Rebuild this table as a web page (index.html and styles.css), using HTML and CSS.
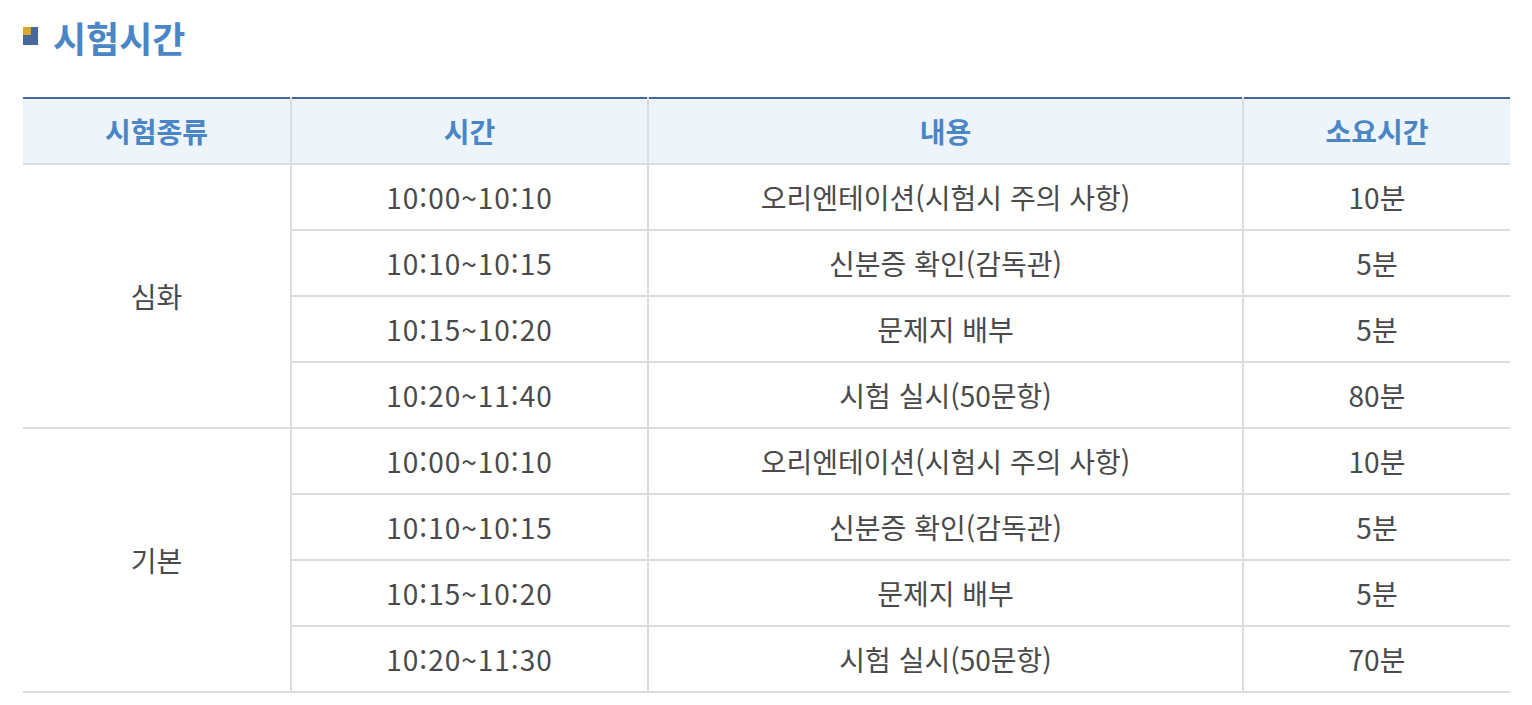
FILE: index.html
```html
<!DOCTYPE html>
<html lang="ko">
<head>
<meta charset="utf-8">
<link rel="stylesheet" href="styles.css">
</head>
<body>
<div class="page">
  <h2 class="title"><span class="bullet"><span class="bullet-corner"></span></span>시험시간</h2>
  <table class="schedule">
    <colgroup>
      <col class="c1"><col class="c2"><col class="c3"><col class="c4">
    </colgroup>
    <thead>
      <tr><th>시험종류</th><th>시간</th><th>내용</th><th>소요시간</th></tr>
    </thead>
    <tbody>
      <tr><td rowspan="4">심화</td><td class="time">10:00~10:10</td><td>오리엔테이션(시험시 주의 사항)</td><td>10분</td></tr>
      <tr><td class="time">10:10~10:15</td><td>신분증 확인(감독관)</td><td>5분</td></tr>
      <tr><td class="time">10:15~10:20</td><td>문제지 배부</td><td>5분</td></tr>
      <tr><td class="time">10:20~11:40</td><td>시험 실시(50문항)</td><td>80분</td></tr>
      <tr><td rowspan="4">기본</td><td class="time">10:00~10:10</td><td>오리엔테이션(시험시 주의 사항)</td><td>10분</td></tr>
      <tr><td class="time">10:10~10:15</td><td>신분증 확인(감독관)</td><td>5분</td></tr>
      <tr><td class="time">10:15~10:20</td><td>문제지 배부</td><td>5분</td></tr>
      <tr><td class="time">10:20~11:30</td><td>시험 실시(50문항)</td><td>70분</td></tr>
    </tbody>
  </table>
</div>
</body>
</html>
```
FILE: styles.css
```css
html, body {
  margin: 0;
  padding: 0;
  background: #fff;
}
.page {
  padding: 0 22px 0 23px;
  font-family: "Noto Sans CJK KR", "Noto Sans", sans-serif;
  color: #444;
}
.title {
  display: flex;
  align-items: center;
  gap: 15px;
  margin: 0 0 21px;
  height: 74px;
  padding-bottom: 2px;
  font-size: 36px;
  font-weight: 700;
  color: #4a86c5;
  letter-spacing: 0;
  line-height: 1;
}
.bullet {
  display: block;
  width: 15px;
  height: 18px;
  background: #44699a;
  margin-top: -2px;
}
.bullet-corner {
  display: block;
  width: 8px;
  height: 8px;
  background: #dca72e;
}
.schedule {
  width: 100%;
  border-collapse: collapse;
  table-layout: fixed;
  border-top: 2px solid #44699a;
}
.c1 { width: 268px; }
.c2 { width: 357px; }
.c3 { width: 595px; }
.c4 { width: auto; }
.schedule th,
.schedule td {
  border: 2px solid #dcdcdc;
  text-align: center;
  vertical-align: middle;
  padding: 0;
  height: 64px;
  line-height: 1;
}
.schedule th {
  background: #edf5fa;
  color: #4a86c5;
  font-weight: 700;
  font-size: 28px;
  border-top: 0;
}
.schedule td {
  color: #4a4a4a;
  font-weight: 400;
  font-size: 28px;
}
.schedule td.time {
  letter-spacing: 1px;
}
.schedule tr > :first-child { border-left: 0; }
.schedule tr > :last-child { border-right: 0; }
.schedule tbody tr:nth-child(n+2):not(:nth-child(5)) > td:first-child { border-left: 2px solid #dcdcdc; }
```
